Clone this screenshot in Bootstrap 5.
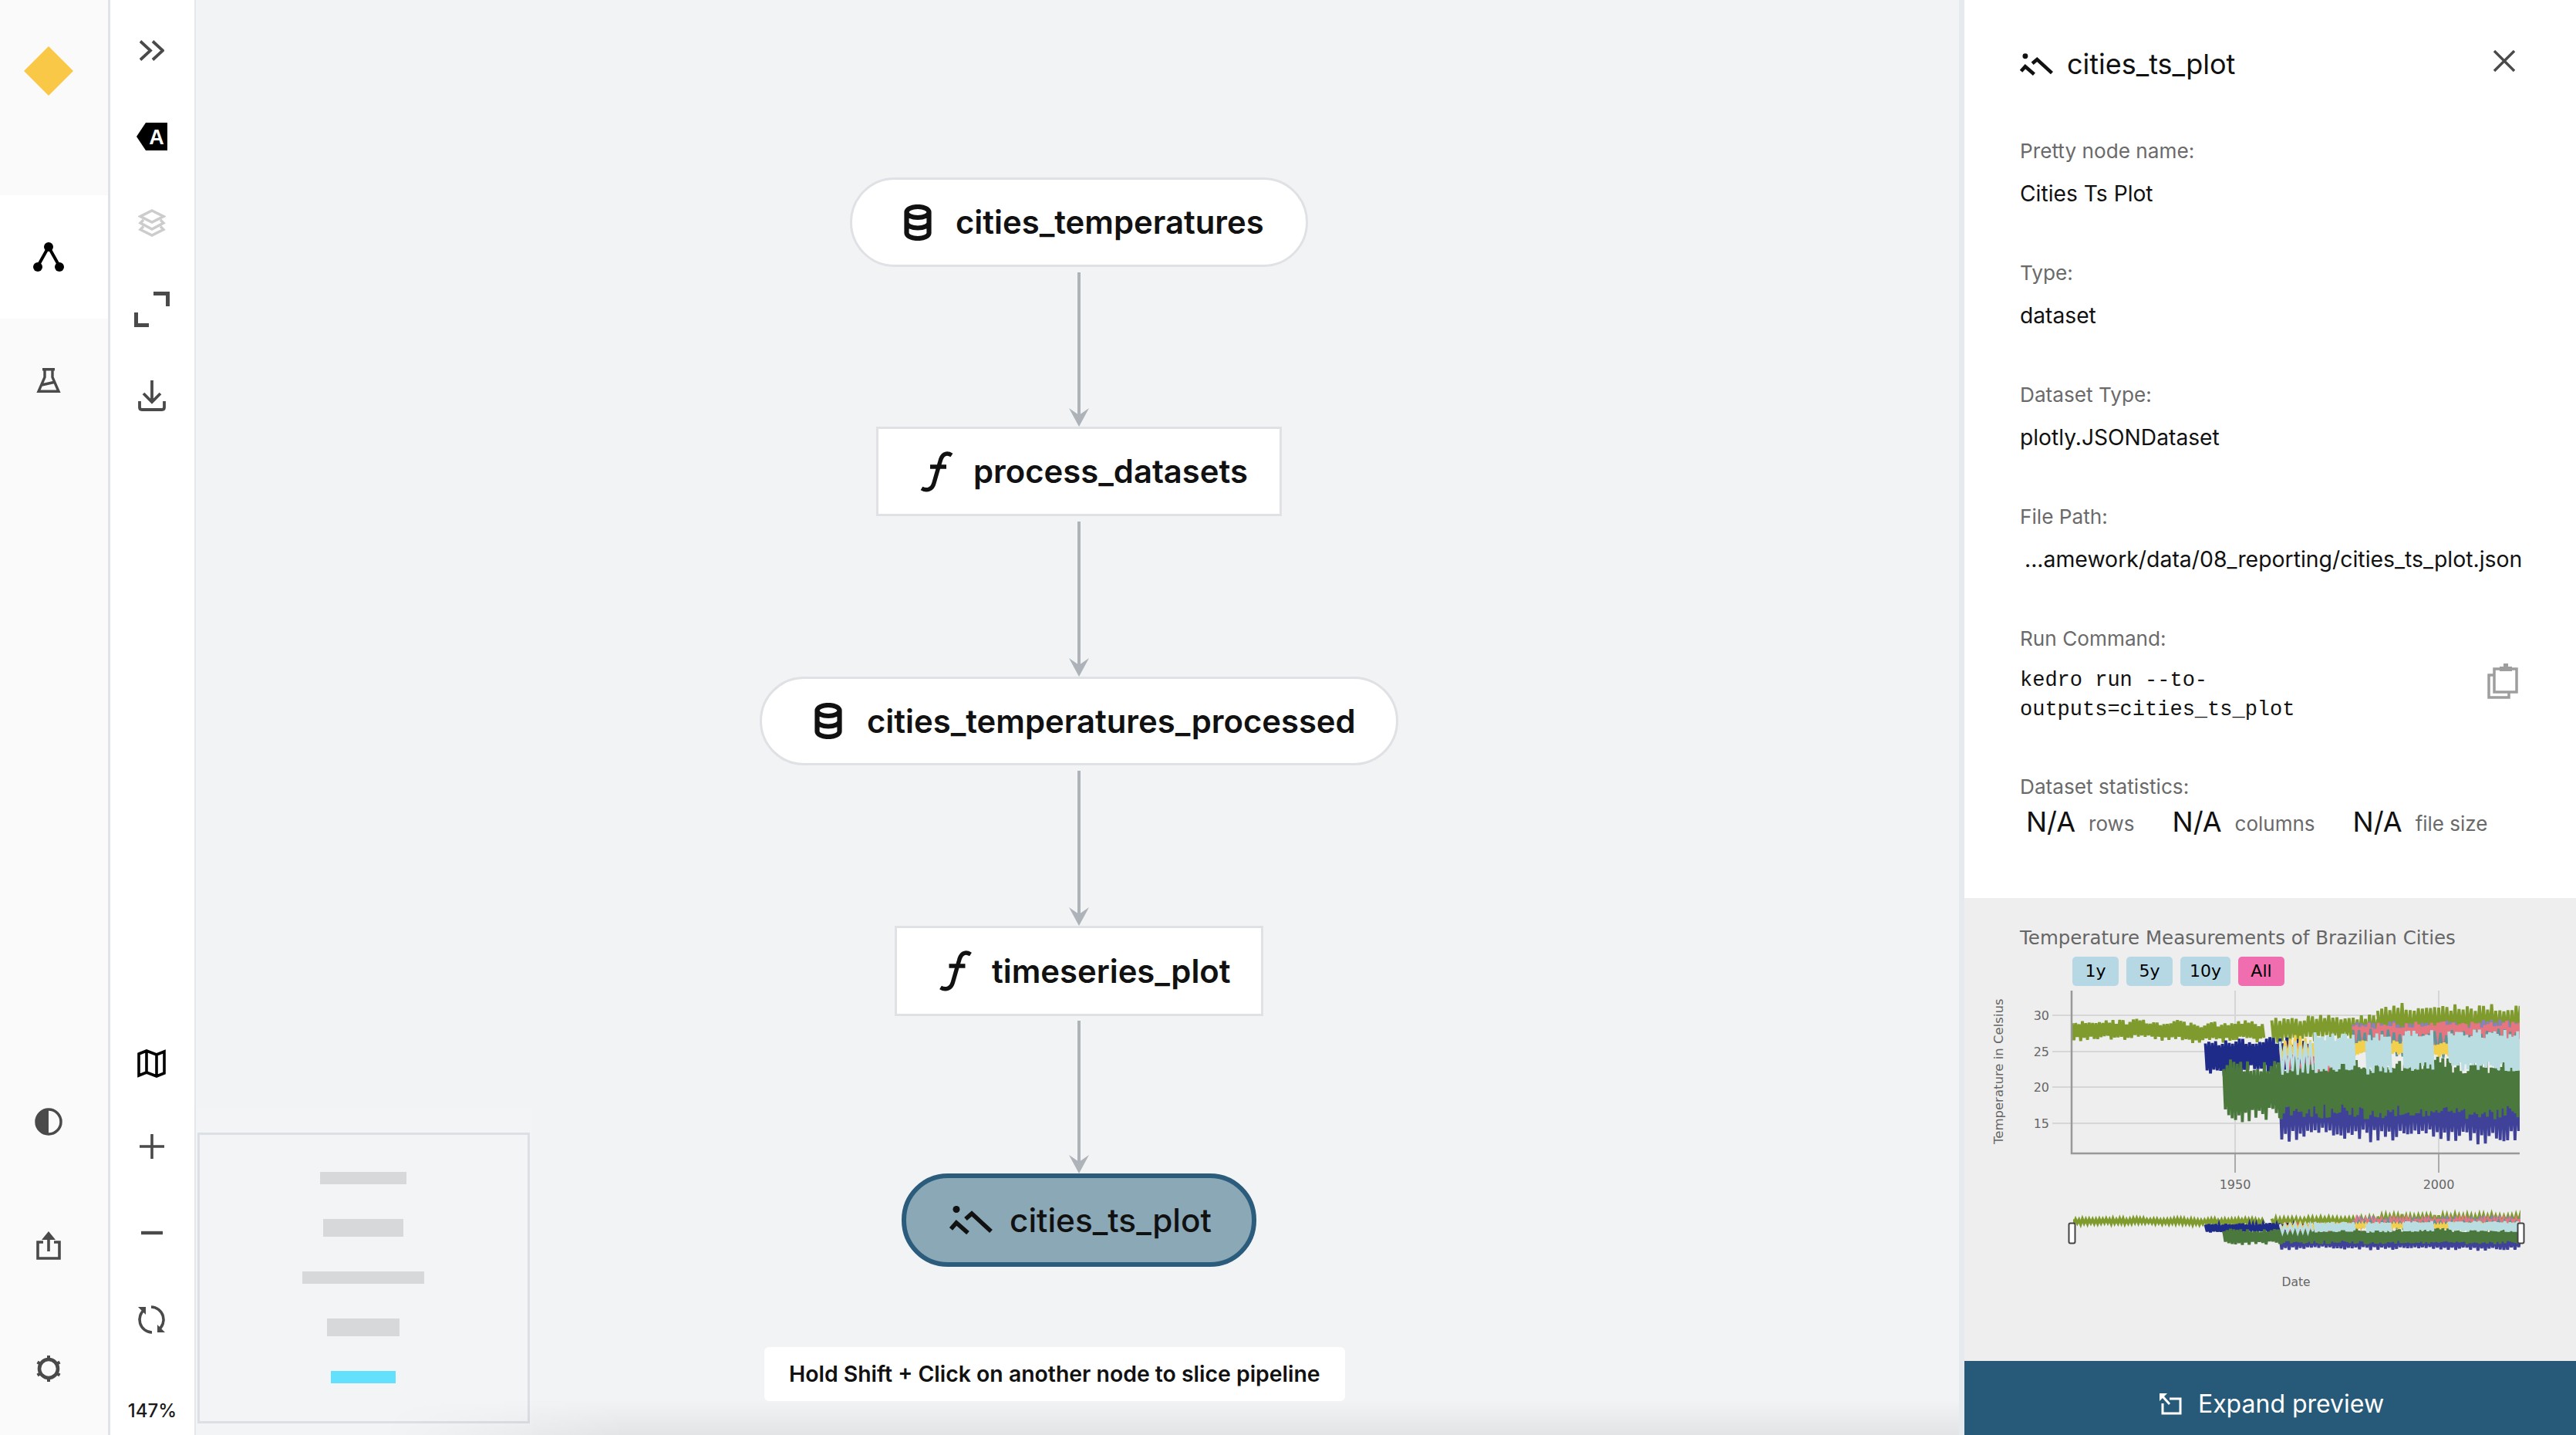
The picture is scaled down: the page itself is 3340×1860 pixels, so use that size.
<!DOCTYPE html>
<html lang="en">
<head>
<meta charset="UTF-8">
<title>Kedro-Viz</title>
<link rel="stylesheet" href="https://cdn.jsdelivr.net/npm/bootstrap@5.3.2/dist/css/bootstrap.min.css">
<style>
    html, body { height: 100%; margin: 0; overflow: hidden; }
    body { font-family: Inter, "Noto Sans", sans-serif; color: #111; background: #f2f3f5; }
    .app-shell { width: 3340px; height: 1860px; }

    .side-rail { width: 143px; background: #fafafa; border-right: 3px solid #e0e4e9; }
    .rail-logo { height: 253px; padding-top: 60px; padding-right: 14px; }
    .rail-item { height: 160px; padding-right: 14px; }
    .rail-item.is-active { background: #fff; }
    .rail-foot { padding-bottom: 6px; }

    .tool-rail { width: 111px; background: #fff; border-right: 2px solid #e4e7eb; padding-top: 9px; }
    .tool-item { height: 112px; padding-right: 2px; }
    .tool-item.tool-map { height: 104px; }
    .tool-zoom { height: 94px; padding-top: 50px; font-size: 24px; font-weight: 500; line-height: 26px; text-align: center; color: #1a1a1a; }

    .graph-area { background: #f2f3f5; padding-top: 230px; padding-left: 4px; }
    .pipe-node { display: flex; align-items: center; background: #fff; border: 3px solid #dfe1e4; font-size: 41.8px; font-weight: 600; line-height: 1; color: #111; white-space: nowrap; flex-shrink: 0; }
    .pipe-node span { padding-top: 2px; }
    .pipe-data { border-radius: 60px; }
    .pipe-node.is-picked { background: #8ba8b7; border: 6px solid #2b5c7c; font-weight: 500; font-size: 42.3px; }
    .node-a { width: 594px; height: 116px; padding-left: 67px; gap: 31px; }
    .node-b { width: 526px; height: 116px; padding-left: 54px; gap: 26px; }
    .node-c { width: 828px; height: 115px; padding-left: 68px; gap: 32px; }
    .node-d { width: 478px; height: 117px; padding-left: 54px; gap: 25px; }
    .node-e { width: 460px; height: 121px; padding-left: 56px; gap: 22px; }
    .pipe-arrow { display: block; flex-shrink: 0; }

    .slice-hint { position: absolute; left: 737px; bottom: 44px; height: 70px; padding: 0 32px; background: #fff; border-radius: 6px; font-size: 28.4px; font-weight: 600; line-height: 70px; white-space: nowrap; }
    .bottom-shade { position: absolute; left: 240px; right: 0; bottom: 0; height: 46px; pointer-events: none; background: linear-gradient(to bottom, rgba(0, 0, 0, 0), rgba(0, 0, 0, .06)); -webkit-mask-image: linear-gradient(to right, transparent, #000 320px); mask-image: linear-gradient(to right, transparent, #000 320px); }

    .mini-map { position: absolute; left: 0; bottom: 0; width: 436px; height: 425px; background: #f3f4f6; padding: 33px 3px 15px 2px; }
    .mini-frame { height: 100%; border: 3px solid #dcdfe3; position: relative; }
    .mini-bar { position: absolute; background: #d7d8da; }
    .mini-bar.is-picked { background: #63e0fc; }
    .mb1 { left: 156px; width: 112px; top: 48px; height: 16px; }
    .mb2 { left: 160px; width: 104px; top: 109px; height: 23px; }
    .mb3 { left: 133px; width: 158px; top: 177px; height: 16px; }
    .mb4 { left: 165px; width: 94px; top: 238px; height: 23px; }
    .mb5 { left: 170px; width: 84px; top: 306px; height: 16px; }

    .meta-panel { width: 800px; background: #fff; border-left: 7px solid #e6e9ed; }
    .meta-body { padding: 58px 79px 0 72px; }
    .meta-title { height: 50px; margin-bottom: 69px; font-size: 36px; line-height: 50px; color: #111; gap: 18px; }
    .meta-row { margin-bottom: 65px; }
    .meta-row.is-tight { margin-bottom: 62px; }
    .meta-label { font-size: 26.2px; line-height: 38px; color: #6a6a6a; margin-bottom: 17px; }
    .meta-value { font-size: 28.2px; line-height: 38px; color: #111; }
    .meta-path { padding-left: 6px; white-space: nowrap; font-size: 28.4px; }
    .meta-code { font-family: "Liberation Mono", monospace; font-size: 27px; line-height: 38px; width: 460px; color: #111; }
    .meta-code-row { margin: -1px -4px 0 0; }
    .copy-icon { margin-top: -3px; }
    .stat-row { margin-top: -10px; padding-left: 8px; white-space: nowrap; }
    .stat-num { font-size: 36px; line-height: 38px; color: #111; margin-right: 17px; }
    .stat-name { font-size: 26px; line-height: 38px; color: #6a6a6a; margin-right: 49px; position: relative; top: 3px; }

    .preview-box { height: 600px; background: #eee; }
    .preview-box svg { display: block; }
    .expand-btn { height: 96px; background: #275a78; color: #fff; border: 0; border-radius: 0; font-size: 32px; line-height: 1; gap: 21px; width: 100%; padding: 16px 0 0 4px; }
    .expand-btn:hover { background: #275a78; color: #fff; }
</style>
</head>
<body>
<div class="app-shell d-flex">

    <nav class="side-rail d-flex flex-column flex-shrink-0">
        <div class="rail-logo d-flex justify-content-center align-items-start">
            <svg width="64" height="64" viewBox="0 0 64 64"><path d="M32 0 64 32 32 64 0 32Z" fill="#f9c846"/></svg>
        </div>
        <div class="rail-item is-active d-flex align-items-center justify-content-center">
            <svg width="42" height="42" viewBox="0 0 42 42"><path d="M21 8 7 33M21 8 35 33" stroke="#000" stroke-width="4" fill="none"/><circle cx="21" cy="8" r="6" fill="#000"/><circle cx="7" cy="34" r="6" fill="#000"/><circle cx="35" cy="34" r="6" fill="#000"/></svg>
        </div>
        <div class="rail-item d-flex align-items-center justify-content-center">
            <svg width="32" height="32" viewBox="0 0 32 32"><path d="M8 1.700H24M11 2V12L3 30.200H29L21 12V2M7 22 25 18" stroke="#4a4a4a" stroke-width="3.400" fill="none"/></svg>
        </div>
        <div class="rail-foot mt-auto">
            <div class="rail-item d-flex align-items-center justify-content-center">
                <svg width="36" height="36" viewBox="0 0 36 36"><circle cx="18" cy="18" r="16" fill="none" stroke="#4a4a4a" stroke-width="3.500"/><path d="M18 2A16 16 0 0 0 18 34Z" fill="#4a4a4a"/></svg>
            </div>
            <div class="rail-item d-flex align-items-center justify-content-center">
                <svg width="32" height="37" viewBox="0 0 32 37"><path d="M9 14H2V35H30V14H23" stroke="#4a4a4a" stroke-width="3.600" fill="none"/><path d="M16 26V6" stroke="#4a4a4a" stroke-width="3.600"/><path d="M7 11 16 0 25 11Z" fill="#4a4a4a"/></svg>
            </div>
            <div class="rail-item d-flex align-items-center justify-content-center">
                <svg width="32" height="34" viewBox="0 0 32 34"><circle cx="16" cy="17" r="12" fill="none" stroke="#4a4a4a" stroke-width="4.600"/><path d="M16 0V6M16 28V34M1.500 8.500 6.500 11.500M25.500 22.500 30.500 25.500M1.500 25.500 6.500 22.500M25.500 11.500 30.500 8.500" stroke="#4a4a4a" stroke-width="4"/></svg>
            </div>
        </div>
    </nav>

    <div class="tool-rail d-flex flex-column flex-shrink-0">
        <div class="tool-item d-flex align-items-center justify-content-center">
            <svg width="32" height="27" viewBox="0 0 32 27"><path d="M1 1.500 14 13.500 1 25.500M17 1.500 30 13.500 17 25.500" stroke="#4a4a4a" stroke-width="3.800" fill="none"/></svg>
        </div>
        <div class="tool-item d-flex align-items-center justify-content-center">
            <svg width="40" height="36" viewBox="0 0 40 36"><path d="M12 0H40V36H12L0 18Z" fill="#000"/><text x="26" y="28" text-anchor="middle" font-family="Liberation Sans" font-weight="700" font-size="27" fill="#fff">A</text></svg>
        </div>
        <div class="tool-item d-flex align-items-center justify-content-center">
            <svg width="36" height="36" viewBox="0 0 36 36"><path d="M18 2 33 9.500 18 17 3 9.500ZM7 14 3 18 18 26 33 18 29 14M7 22.500 3 26.500 18 34 33 26.500 29 22.500" stroke="#ccc" stroke-width="3.400" fill="none"/></svg>
        </div>
        <div class="tool-item d-flex align-items-center justify-content-center">
            <svg width="46" height="46" viewBox="0 0 46 46"><path d="M25 2.500H43.500V19M2.500 27V43.500H19" stroke="#4a4a4a" stroke-width="5" fill="none"/></svg>
        </div>
        <div class="tool-item d-flex align-items-center justify-content-center">
            <svg width="36" height="40" viewBox="0 0 36 40"><path d="M18 0V27M7 17 18 28 29 17M2 27V35Q2 38 5 38H31Q34 38 34 35V27" stroke="#4a4a4a" stroke-width="3.800" fill="none"/></svg>
        </div>

        <div class="tool-item tool-map mt-auto d-flex align-items-center justify-content-center">
            <svg width="37" height="37" viewBox="0 0 37 37"><path d="M2 6 12 2 25 7 35 3V31L25 35 12 30 2 34ZM12 2V30M25 7V35" stroke="#000" stroke-width="3.600" fill="none"/></svg>
        </div>
        <div class="tool-item d-flex align-items-center justify-content-center">
            <svg width="32" height="32" viewBox="0 0 32 32"><path d="M16 0V32M0 16H32" stroke="#4a4a4a" stroke-width="3.600"/></svg>
        </div>
        <div class="tool-item d-flex align-items-center justify-content-center">
            <svg width="28" height="6" viewBox="0 0 28 6"><path d="M0 3H28" stroke="#4a4a4a" stroke-width="4.400"/></svg>
        </div>
        <div class="tool-item d-flex align-items-center justify-content-center">
            <svg width="37" height="37" viewBox="0 0 37 37"><path d="M18 2A16.500 16.500 0 0 1 27 32M19 35A16.500 16.500 0 0 1 10 5" stroke="#4a4a4a" stroke-width="3.600" fill="none"/><path d="M1 2H11V12ZM36 35H26V25Z" fill="#4a4a4a"/></svg>
        </div>
        <div class="tool-zoom">147%</div>
    </div>

    <main class="graph-area flex-grow-1 position-relative d-flex flex-column align-items-center">
        <div class="pipe-node pipe-data node-a">
            <svg width="36" height="47" viewBox="0 0 36 47" class="flex-shrink-0"><path d="M3.500 10V37C3.500 41 10 44 18 44S32.500 41 32.500 37V10M3.500 10C3.500 6 10 3 18 3S32.500 6 32.500 10 26 17 18 17 3.500 14 3.500 10ZM3.500 23.500C3.500 27.500 10 30.500 18 30.500S32.500 27.500 32.500 23.500" stroke="#111" stroke-width="6.200" fill="none"/></svg>
            <span>cities_temperatures</span>
        </div>
        <svg class="pipe-arrow" width="26" height="207" viewBox="0 0 26 207"><path d="M13 7V195" stroke="#adb3b8" stroke-width="4"/><path d="M13 207 0 183 13 192 26 183Z" fill="#adb3b8"/></svg>
        <div class="pipe-node node-b">
            <svg width="43" height="53" viewBox="0 0 43 53" class="flex-shrink-0"><path d="M41 5C33 0 28 5 26 13L18 41C16 49 9 52 2 48M13 20H34" stroke="#111" stroke-width="5.400" fill="none"/></svg>
            <span>process_datasets</span>
        </div>
        <svg class="pipe-arrow" width="26" height="208" viewBox="0 0 26 208"><path d="M13 7V196" stroke="#adb3b8" stroke-width="4"/><path d="M13 208 0 184 13 193 26 184Z" fill="#adb3b8"/></svg>
        <div class="pipe-node pipe-data node-c">
            <svg width="36" height="47" viewBox="0 0 36 47" class="flex-shrink-0"><path d="M3.500 10V37C3.500 41 10 44 18 44S32.500 41 32.500 37V10M3.500 10C3.500 6 10 3 18 3S32.500 6 32.500 10 26 17 18 17 3.500 14 3.500 10ZM3.500 23.500C3.500 27.500 10 30.500 18 30.500S32.500 27.500 32.500 23.500" stroke="#111" stroke-width="6.200" fill="none"/></svg>
            <span>cities_temperatures_processed</span>
        </div>
        <svg class="pipe-arrow" width="26" height="208" viewBox="0 0 26 208"><path d="M13 7V196" stroke="#adb3b8" stroke-width="4"/><path d="M13 208 0 184 13 193 26 184Z" fill="#adb3b8"/></svg>
        <div class="pipe-node node-d">
            <svg width="44" height="53" viewBox="0 0 43 53" class="flex-shrink-0"><path d="M41 5C33 0 28 5 26 13L18 41C16 49 9 52 2 48M13 20H34" stroke="#111" stroke-width="5.400" fill="none"/></svg>
            <span>timeseries_plot</span>
        </div>
        <svg class="pipe-arrow" width="26" height="204" viewBox="0 0 26 204"><path d="M13 6V192" stroke="#adb3b8" stroke-width="4"/><path d="M13 204 0 180 13 189 26 180Z" fill="#adb3b8"/></svg>
        <div class="pipe-node pipe-data is-picked node-e">
            <svg width="56" height="37" viewBox="0 0 56 37" class="flex-shrink-0"><circle cx="9" cy="4.500" r="4.500" fill="#111"/><path d="M2 30 9 22 24 35M21 17 29 10 54 33" stroke="#111" stroke-width="5.600" fill="none"/></svg>
            <span>cities_ts_plot</span>
        </div>

        <div class="slice-hint">Hold Shift + Click on another node to slice pipeline</div>

        <div class="mini-map">
            <div class="mini-frame">
                <div class="mini-bar mb1"></div>
                <div class="mini-bar mb2"></div>
                <div class="mini-bar mb3"></div>
                <div class="mini-bar mb4"></div>
                <div class="mini-bar is-picked mb5"></div>
            </div>
        </div>
        <div class="bottom-shade"></div>
    </main>

    <aside class="meta-panel d-flex flex-column flex-shrink-0">
        <div class="meta-body flex-grow-1">
            <div class="meta-title d-flex align-items-center">
                <svg width="43" height="29" viewBox="0 0 56 37" class="flex-shrink-0"><circle cx="9" cy="4.500" r="4.500" fill="#111"/><path d="M2 30 9 22 24 35M21 17 29 10 54 33" stroke="#111" stroke-width="6" fill="none"/></svg>
                <span class="flex-grow-1">cities_ts_plot</span>
                <svg width="28" height="28" viewBox="0 0 28 28" class="flex-shrink-0 mb-2"><path d="M1 1 27 27M27 1 1 27" stroke="#4a4a4a" stroke-width="3.400"/></svg>
            </div>
            <div class="meta-row">
                <div class="meta-label">Pretty node name:</div>
                <div class="meta-value">Cities Ts Plot</div>
            </div>
            <div class="meta-row">
                <div class="meta-label">Type:</div>
                <div class="meta-value">dataset</div>
            </div>
            <div class="meta-row">
                <div class="meta-label">Dataset Type:</div>
                <div class="meta-value">plotly.JSONDataset</div>
            </div>
            <div class="meta-row">
                <div class="meta-label">File Path:</div>
                <div class="meta-value meta-path">...amework/data/08_reporting/cities_ts_plot.json</div>
            </div>
            <div class="meta-row is-tight">
                <div class="meta-label">Run Command:</div>
                <div class="meta-code-row d-flex justify-content-between align-items-start">
                    <div class="meta-code">kedro run --to-outputs=cities_ts_plot</div>
                    <svg width="40" height="46" viewBox="0 0 40 46" class="copy-icon flex-shrink-0"><path d="M9 7H38V37H9Z" stroke="#9e9e9e" stroke-width="3.500" fill="none"/><path d="M8 15H2V44H28V38" stroke="#9e9e9e" stroke-width="3.500" fill="none"/><path d="M16 4H21V0H27V4H32V10H16Z" fill="#9e9e9e"/></svg>
                </div>
            </div>
            <div>
                <div class="meta-label">Dataset statistics:</div>
                <div class="stat-row d-flex align-items-center">
                    <span class="stat-num">N/A</span><span class="stat-name">rows</span>
                    <span class="stat-num">N/A</span><span class="stat-name">columns</span>
                    <span class="stat-num">N/A</span><span class="stat-name">file size</span>
                </div>
            </div>
        </div>

        <div class="preview-box flex-shrink-0">
            <svg id="previewPlot" width="793" height="600" viewBox="2547 1164 793 600"></svg>
        </div>
        <button class="btn expand-btn d-flex align-items-center justify-content-center flex-shrink-0" type="button">
            <svg width="29" height="28" viewBox="0 0 29 28"><path d="M13 7H27V26H4V13" stroke="#fff" stroke-width="3" fill="none"/><path d="M13 14 4 4" stroke="#fff" stroke-width="3"/><path d="M0 0H10L0 10Z" fill="#fff"/></svg>
            <span>Expand preview</span>
        </button>
    </aside>
</div>

<script src="https://cdn.jsdelivr.net/npm/bootstrap@5.3.2/dist/js/bootstrap.bundle.min.js"></script>
<script>
    // fake plotly chart: fixed seed so the picture stays the same between runs
    var seed = 4711;
    function rnd() {
        seed = (seed * 16807) % 2147483647;
        return seed / 2147483647;
    }

    var xOf = function(year) { return 2898 + (year - 1950) * 5.28; };
    var yMain = function(t) { return 1316 + (30 - t) * 9.33; };
    var yMini = function(t) { return 1578 + (30 - t) * 2.4; };

    // [from, to, low, high, colour, points per year, stroke width]
    var series = [
        [1910, 1957.5, 26.4, 29.2, "#7f9b2d", 2.4, 3.8],
        [1959, 1985, 26.2, 30, "#7f9b2d", 2, 3.8],
        [1985, 2020.5, 26.5, 31.6, "#7f9b2d", 2, 3.8],
        [1942.7, 1968, 21.8, 26.9, "#1e2b88", 2.4, 3.8],
        [1979, 2020.5, 26, 29.4, "#8c7fc0", 2, 3.8],
        [1961, 1979, 20.5, 26.5, "#e2606e", 1.4, 2.8],
        [1979, 2020.5, 25, 29.2, "#e5767f", 2.6, 3.8],
        [1979, 2020.5, 24, 28, "#5f9296", 1.4, 3],
        [1961, 1969, 23.5, 27, "#f2d04e", 1.6, 2.8],
        [1969, 2020.5, 24.2, 26.2, "#f2d04e", 2.6, 3.6],
        [1961, 2020.5, 12.4, 20.8, "#3f4298", 2.2, 3.8],
        [1947.2, 1961, 15.4, 24, "#4b783c", 2.4, 3.8],
        [1961, 2020.5, 15.6, 24, "#4b783c", 3.2, 3.8],
        [1961, 1969.5, 21.5, 27.2, "#b9dde0", 1.6, 3],
        [1969.6, 1979.3, 22, 27.6, "#b9dde0", 3.2, 3.8],
        [1982.3, 1988.5, 21.6, 27.4, "#b9dde0", 3.2, 3.8],
        [1991.4, 1998.6, 22, 27.8, "#b9dde0", 3.2, 3.8],
        [2002.5, 2020.5, 22.2, 28, "#b9dde0", 3.2, 3.8]
    ];

    function buildLines() {
        var main = "", mini = "";
        series.forEach(function(s) {
            var mainPts = [], miniPts = [], high = true, drift = 0;
            for (var year = s[0]; year <= s[1]; year += 1 / s[5]) {
                var mid = (s[2] + s[3]) / 2, amp = (s[3] - s[2]) / 2;
                drift = drift * 0.93 + (rnd() - 0.5) * 0.22;
                var t = mid + drift + (high ? 1 : -1) * amp * (0.55 + rnd() * 0.45);
                mainPts.push(xOf(year).toFixed(1) + "," + yMain(t).toFixed(1));
                miniPts.push(xOf(year).toFixed(1) + "," + yMini(t).toFixed(1));
                high = !high;
            }
            var attrs = '" fill="none" stroke="' + s[4] + '" stroke-width="' + s[6] + '"/>';
            main += '<polyline points="' + mainPts.join(" ") + attrs;
            mini += '<polyline points="' + miniPts.join(" ") + attrs;
        });
        return { main: main, mini: mini };
    }

    function rangeButton(x, w, label, fill) {
        return '<rect x="' + x + '" y="1240" width="' + w + '" height="38" rx="5" fill="' + fill + '"/>' +
            '<text x="' + (x + w / 2) + '" y="1266" text-anchor="middle" font-size="22" fill="#000">' + label + '</text>';
    }

    var lines = buildLines();
    var html = '<defs><clipPath id="plotClip"><rect x="2686" y="1270" width="581" height="225"/></clipPath>' +
        '<clipPath id="miniClip"><rect x="2688" y="1560" width="580" height="70"/></clipPath></defs>' +
        '<g font-family="DejaVu Sans, sans-serif">' +
        '<text x="2619" y="1224" font-size="24.500" fill="#666">Temperature Measurements of Brazilian Cities</text>' +
        rangeButton(2687, 60, "1y", "#b6d8e5") + rangeButton(2757, 60, "5y", "#b6d8e5") +
        rangeButton(2827, 65, "10y", "#b6d8e5") + rangeButton(2902, 60, "All", "#f06eb0") +
        '<text transform="translate(2597 1483) rotate(-90)" font-size="16.500" fill="#666">Temperature in Celsius</text>';

    [[30, 1316], [25, 1363], [20, 1409], [15, 1456]].forEach(function(tick) {
        html += '<path d="M2661 ' + tick[1] + 'H3267" stroke="#d6d6d6" stroke-width="2"/>' +
            '<text x="2657" y="' + (tick[1] + 6) + '" text-anchor="end" font-size="16" fill="#666">' + tick[0] + '</text>';
    });
    [[1950, 2898], [2000, 3162]].forEach(function(tick) {
        html += '<path d="M' + tick[1] + ' 1284V1495" stroke="#d6d6d6" stroke-width="2"/>' +
            '<path d="M' + tick[1] + ' 1495V1520" stroke="#aaa" stroke-width="2"/>' +
            '<text x="' + tick[1] + '" y="1541" text-anchor="middle" font-size="16" fill="#666">' + tick[0] + '</text>';
    });

    html += '<g clip-path="url(#plotClip)">' + lines.main + '</g>' +
        '<path d="M2686 1284V1495H3267" fill="none" stroke="#999" stroke-width="2.500"/>' +
        '<g clip-path="url(#miniClip)">' + lines.mini + '</g>' +
        '<rect x="2682.500" y="1585.500" width="8" height="26" rx="2" fill="#fff" stroke="#444" stroke-width="2"/>' +
        '<rect x="3264.500" y="1585.500" width="8" height="26" rx="2" fill="#fff" stroke="#444" stroke-width="2"/>' +
        '<text x="2977" y="1667" text-anchor="middle" font-size="15.500" fill="#666">Date</text></g>';

    document.getElementById("previewPlot").innerHTML = html;
</script>
</body>
</html>
